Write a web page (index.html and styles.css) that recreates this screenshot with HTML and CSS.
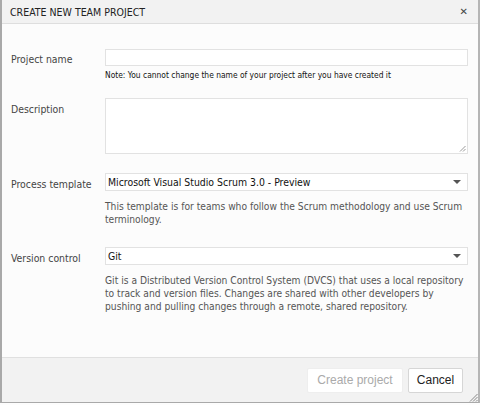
FILE: index.html
```html
<!DOCTYPE html>
<html>
<head>
<meta charset="utf-8">
<link rel="stylesheet" href="styles.css">
</head>
<body>
<div class="dialog">
  <div class="titlebar">
    <span class="title">CREATE NEW TEAM PROJECT</span>
    <span class="close">&#x2715;</span>
  </div>
  <div class="body">
    <div class="row row-name">
      <div class="label">Project name</div>
      <div class="field">
        <div class="input"></div>
        <div class="note">Note: You cannot change the name of your project after you have created it</div>
      </div>
    </div>
    <div class="row row-desc">
      <div class="label">Description</div>
      <div class="field">
        <div class="textarea">
          <svg class="grip" width="7" height="7" viewBox="0 0 7 7"><path d="M6.5 1 L1 6.5 M6.5 4 L4 6.5" stroke="#999" stroke-width="1"/></svg>
        </div>
      </div>
    </div>
    <div class="row row-tpl">
      <div class="label">Process template</div>
      <div class="field">
        <div class="select"><span>Microsoft Visual Studio Scrum 3.0 - Preview</span><span class="arrow"></span></div>
        <div class="help">This template is for teams who follow the Scrum methodology and use Scrum terminology.</div>
      </div>
    </div>
    <div class="row row-vc">
      <div class="label">Version control</div>
      <div class="field">
        <div class="select"><span>Git</span><span class="arrow"></span></div>
        <div class="help">Git is a Distributed Version Control System (DVCS) that uses a local repository to track and version files. Changes are shared with other developers by pushing and pulling changes through a remote, shared repository.</div>
      </div>
    </div>
  </div>
  <div class="footer">
    <button class="btn disabled">Create project</button>
    <button class="btn cancel">Cancel</button>
    <svg class="corner" width="9" height="9" viewBox="0 0 9 9"><path d="M8.5 1 L1 8.5 M8.5 4 L4 8.5 M8.5 7 L7 8.5" stroke="#888" stroke-width="1"/></svg>
  </div>
</div>
</body>
</html>
```

FILE: styles.css
```css
html, body {
  margin: 0;
  padding: 0;
  background: #fdfdfd;
}
body {
  width: 480px;
  height: 405px;
  overflow: hidden;
  font-family: "DejaVu Sans Condensed", "DejaVu Sans", Verdana, sans-serif;
}
.dialog {
  width: 476px;
  height: 402px;
  border-left: 2px solid #a9a9a9;
  border-right: 2px solid #b5b5b5;
  border-bottom: 1px solid #a9a9a9;
  display: flex;
  flex-direction: column;
  background: #fcfcfc;
}
.titlebar {
  height: 23px;
  background: #f2f2f2;
  border-bottom: 1px solid #dedede;
  display: flex;
  align-items: center;
  justify-content: space-between;
  padding: 0 10px 0 8px;
}
.title {
  font-size: 10.5px;
  color: #222;
  padding-top: 1px;
}
.close {
  font-family: "DejaVu Sans", sans-serif;
  font-size: 10px;
  color: #444;
  font-weight: bold;
}
.body {
  flex: 1;
  display: flex;
  flex-direction: column;
  padding: 25px 0 0 9px;
}
.row {
  display: flex;
}
.label {
  width: 94px;
  font-size: 10.4px;
  color: #444;
}
.field {
  width: 363px;
}
.row-name .label { padding-top: 4px; }
.input {
  height: 15px;
  border: 1px solid #e2e2e2;
  background: #fff;
}
.note {
  font-size: 8.4px;
  color: #111;
  margin-top: 4px;
}
.row-desc { margin-top: 18px; }
.row-desc .label { padding-top: 5px; }
.textarea {
  height: 54px;
  border: 1px solid #e2e2e2;
  background: #fff;
  position: relative;
}
.grip {
  position: absolute;
  right: 1px;
  bottom: 1px;
}
.row-tpl { margin-top: 19px; }
.row-tpl .label, .row-vc .label { padding-top: 5px; }
.select {
  height: 16px;
  border: 1px solid #e2e2e2;
  background: #fff;
  display: flex;
  align-items: center;
  justify-content: space-between;
  padding: 0 6px 0 2px;
  font-size: 10.4px;
  color: #111;
}
.arrow {
  width: 0;
  height: 0;
  border-left: 4px solid transparent;
  border-right: 4px solid transparent;
  border-top: 4px solid #555;
}
.help {
  font-size: 10.2px;
  line-height: 13px;
  color: #555;
  margin-top: 9px;
}
.row-vc { margin-top: 21px; }
.footer {
  height: 44px;
  border-top: 1px solid #e0e0e0;
  background: #f2f2f2;
  display: flex;
  align-items: center;
  justify-content: flex-end;
  gap: 5px;
  padding-right: 15px;
  position: relative;
}
.btn {
  height: 25px;
  border: 1px solid #d6d6d6;
  background: #fff;
  font-family: "Liberation Sans", Arial, sans-serif;
  font-size: 12px;
  color: #222;
  padding: 0;
  border-radius: 2px;
  white-space: nowrap;
}
.btn.disabled {
  color: #aaa;
  border-color: #eee;
  width: 96px;
}
.btn.cancel {
  width: 55px;
}
.corner {
  position: absolute;
  right: 0;
  bottom: 0;
}
```
